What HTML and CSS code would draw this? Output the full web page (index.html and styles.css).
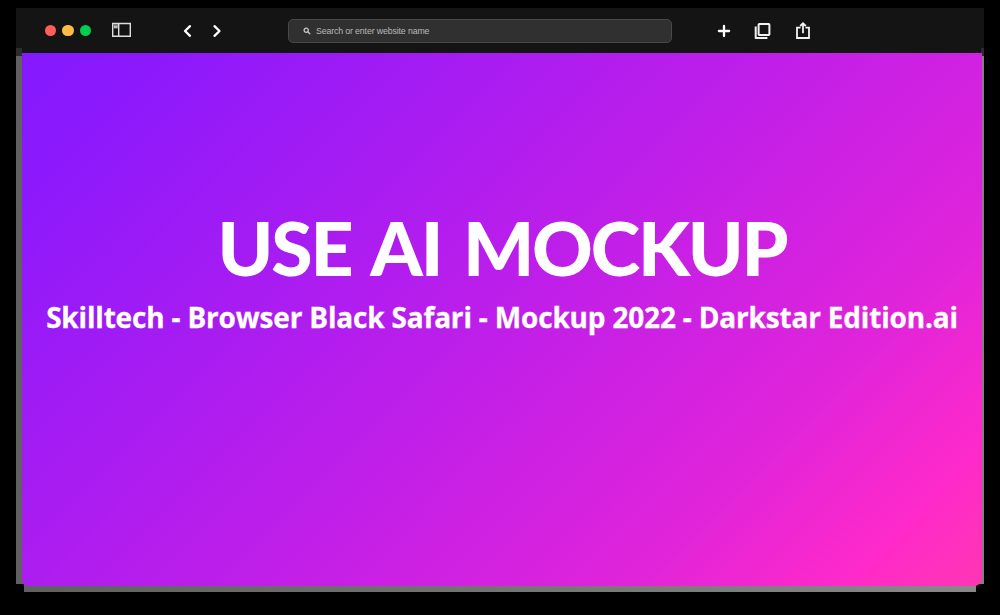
FILE: index.html
```html
<!DOCTYPE html>
<html lang="en">
<head>
<meta charset="utf-8">
<title>Browser Mockup</title>
<link rel="stylesheet" href="styles.css">
</head>
<body>
<div class="window">
  <header class="toolbar">
    <div class="lights"><span class="light red"></span><span class="light yellow"></span><span class="light green"></span></div>
    <svg class="sidebar-icon" width="20" height="16" viewBox="0 0 20 16" fill="none" stroke="#dedede" stroke-width="1.4"><path d="M.7 1.5H18.3V14.3H.7Z"/><path d="M6.7 1.5V14.3"/><path d="M1.4 2.2H6V6.5H1.4Z" fill="#888" stroke="none"/><path d="M2 5H5" stroke-width="1.2"/></svg>
    <nav class="history">
      <svg width="10" height="14" viewBox="0 0 10 14" fill="none" stroke="#fff" stroke-width="2.3" stroke-linecap="round" stroke-linejoin="round"><path d="M7 2.2L2 7L7 11.8"/></svg>
      <svg width="10" height="14" viewBox="0 0 10 14" fill="none" stroke="#fff" stroke-width="2.3" stroke-linecap="round" stroke-linejoin="round"><path d="M2.5 2.2L7.5 7L2.5 11.8"/></svg>
    </nav>
    <div class="address">
      <svg width="8" height="8" viewBox="0 0 8 8" fill="none" stroke="#c8c8c8" stroke-width="1.3" stroke-linecap="round"><circle cx="3.2" cy="3.2" r="2.1"/><path d="M5 5L6.8 6.8"/></svg>
      <span class="placeholder">Search or enter website name</span>
    </div>
    <div class="actions">
      <svg width="14" height="14" viewBox="0 0 14 14" fill="none" stroke="#fff" stroke-width="2.3" stroke-linecap="round"><path d="M7 1.9V12.1M1.9 7H12.1"/></svg>
      <svg width="18" height="18" viewBox="0 0 18 18" fill="none" stroke="#f2f2f2" stroke-width="2" stroke-linejoin="round"><rect x="4.6" y="2" width="10.8" height="11" rx=".7"/><path d="M1.7 4.5V16H13.4"/></svg>
      <svg width="16" height="18" viewBox="0 0 16 18" fill="none" stroke="#f2f2f2" stroke-width="1.8"><path d="M5.5 5.7H2V16H14V5.7H10.5M8 11.2V1.5M5.2 4L8 1.3L10.8 4"/></svg>
    </div>
  </header>
  <div class="frame">
    <main class="screen">
      <h1 class="title">USE AI MOCKUP</h1>
      <p class="subtitle">Skilltech - Browser Black Safari - Mockup 2022 - Darkstar Edition.ai</p>
    </main>
  </div>
</div>
</body>
</html>
```
FILE: styles.css
```css
* { box-sizing: border-box; }
body { margin: 0; height: 615px; overflow: hidden; background: #000; }
.window { margin: 8px 16px 0; height: 584px; display: flow-root; }
.toolbar {
  height: 45px;
  background:
    linear-gradient(#2c2c2c, #2c2c2c) 0 100% / 6px 5px no-repeat,
    linear-gradient(#2c2c2c, #2c2c2c) 100% 100% / 3px 5px no-repeat,
    #141414;
  display: flex;
  align-items: center;
  padding-left: 29px;
}
.lights { display: flex; gap: 6.2px; }
.light { width: 11.2px; height: 11.2px; border-radius: 50%; }
.red { background: #ff5f5b; }
.yellow { background: #ffbd43; }
.green { background: #00ce4e; }
.sidebar-icon { margin: -1px 0 0 21px; }
.history { display: flex; gap: 19px; margin-left: 51px; }
.address { width: 384px; height: 24px; margin-left: 66px; border: 1px solid #484848; border-radius: 5px; background: #303030; display: flex; align-items: center; gap: 5px; padding-left: 14px; }
.placeholder { font: 8.8px "Liberation Sans", Arial, sans-serif; letter-spacing: -.14px; color: #b8b8b8; white-space: nowrap; }
.actions { display: flex; align-items: center; margin-left: 45px; gap: 23px; }
.frame {
  height: 539px;
  padding: 0 2px 6px 6px;
  background:
    linear-gradient(#2c2c2c, #2c2c2c) 0 0 / 100% 3px no-repeat,
    linear-gradient(90deg, #606060, #808080) 0 3px / 100% 528px no-repeat,
    linear-gradient(90deg, #606060, #888) 8px 531px / 952px 8px no-repeat;
}
.screen {
  height: 533px;
  border-radius: 0 0 8px 6px;
  background: linear-gradient(135deg, #8419ff 0%, #8c19fc 9%, #c11fe8 52%, #e024da 76%, #ff2ac9 91%, #ff36b4 100%);
  color: #fff;
  text-align: center;
  display: flex;
  flex-direction: column;
  align-items: center;
  padding-top: 142px;
}
.title { margin: 0; font: 900 75px/104px Lato, "Open Sans", sans-serif; letter-spacing: -2.2px; word-spacing: 6px; white-space: nowrap; }
.subtitle { margin: 0; font: 700 28px/36px "Open Sans", "Noto Sans", sans-serif; letter-spacing: -.18px; -webkit-text-stroke: .3px #fff; white-space: nowrap; }
```
